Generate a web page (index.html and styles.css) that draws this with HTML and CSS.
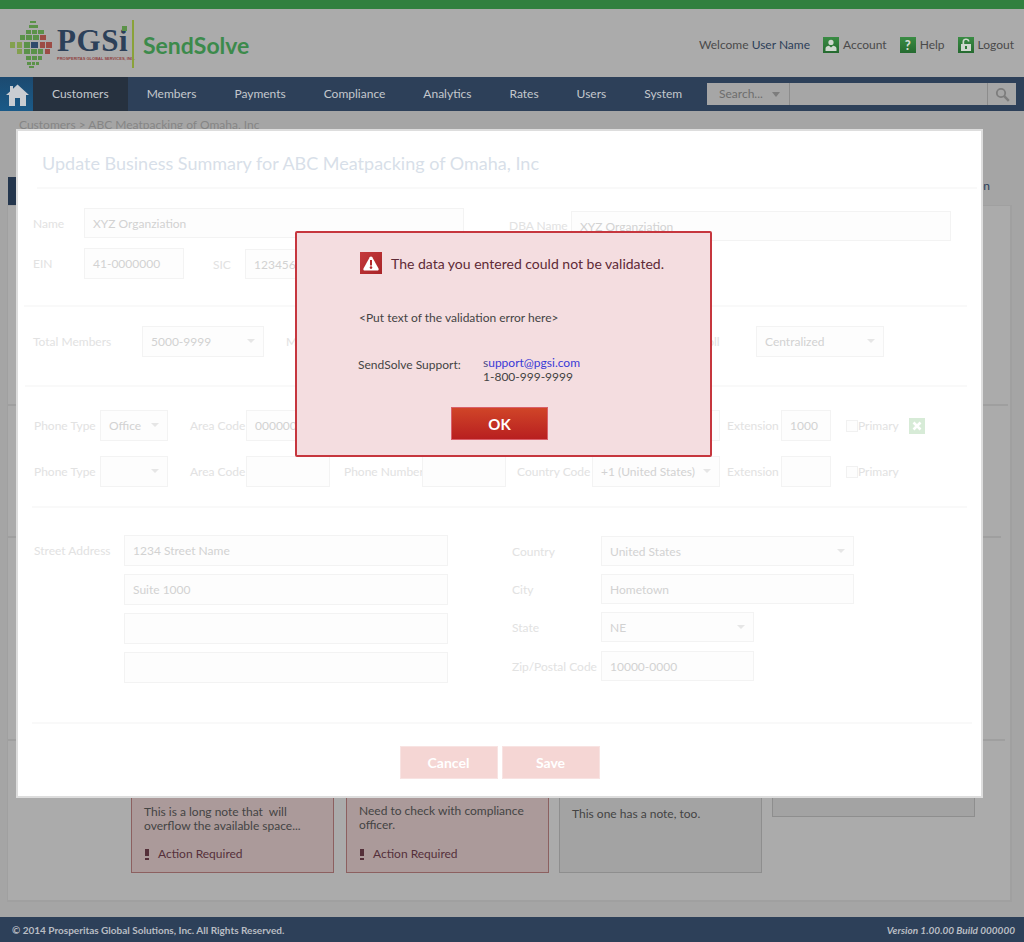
FILE: index.html
```html
<!DOCTYPE html>
<html lang="en">
<head>
  <meta charset="UTF-8">
  <title>SendSolve - Update Business Summary</title>
  <link rel="stylesheet" href="styles.css">
</head>
<body>
  <div class="topStrip"></div>

  <header class="siteHeader">
    <div class="logo">
      <svg class="globe" width="42" height="47" viewBox="0 0 42 47">
        <g fill="#5b9249">
          <rect x="20" y="0" width="6" height="2"/>
          <rect x="19" y="4" width="9" height="3"/>
          <rect x="16" y="9" width="5" height="4"/><rect x="22" y="9" width="5" height="4"/><rect x="28" y="9" width="6" height="4"/>
          <rect x="10" y="14" width="5" height="5"/><rect x="16" y="14" width="6" height="5"/><rect x="23" y="14" width="6" height="5"/>
          <rect x="14" y="21" width="6" height="6"/>
          <rect x="14" y="28" width="6" height="5"/><rect x="21" y="28" width="6" height="5"/><rect x="28" y="28" width="5" height="5"/>
          <rect x="16" y="35" width="5" height="4"/><rect x="22" y="35" width="5" height="4"/><rect x="28" y="35" width="4" height="4"/>
          <rect x="17" y="41" width="4" height="3"/><rect x="22" y="41" width="3" height="3"/><rect x="26" y="41" width="3" height="3"/>
          <rect x="19" y="45" width="5" height="2"/>
        </g>
        <g fill="#83a04f">
          <rect x="0" y="21" width="5" height="6"/><rect x="7" y="21" width="5" height="6"/>
          <rect x="7" y="28" width="5" height="5"/>
        </g>
        <rect x="21" y="21" width="7" height="6" fill="#2f4a6b"/>
        <g fill="#9c4c45">
          <rect x="30" y="14" width="6" height="5"/>
          <rect x="30" y="21" width="5" height="6"/><rect x="36" y="21" width="6" height="6"/>
          <rect x="35" y="28" width="5" height="5"/>
        </g>
      </svg>
      <div class="wordmark">
        <div class="pgsi">PGS<span class="pgsiDot">i</span></div>
        <div class="tagline">PROSPERITAS GLOBAL SERVICES, INC.</div>
      </div>
      <div class="logoRule"></div>
      <div class="product">SendSolve</div>
    </div>
    <div class="userLinks">
      <span class="welcome">Welcome <b class="userName">User Name</b></span>
      <a class="userLink">
        <span class="linkIcon">
          <svg width="12" height="12" viewBox="0 0 12 12"><circle cx="6" cy="3.4" r="2.6" fill="#cfd8cf"/><path d="M0.5 12V9.5C0.5 7.8 2.5 7 4 6.8L6 8.6L8 6.8C9.5 7 11.5 7.8 11.5 9.5V12Z" fill="#cfd8cf"/></svg>
        </span>
        Account
      </a>
      <a class="userLink helpLink">
        <span class="linkIcon">?</span>
        Help
      </a>
      <a class="userLink logoutLink">
        <span class="linkIcon">
          <svg width="12" height="13" viewBox="0 0 12 13"><path d="M2.5 6V3.6C2.5 1.6 4 0.5 6 0.5S9.5 1.6 9.5 3.4H7.8C7.8 2.6 7 2.1 6 2.1S4.2 2.6 4.2 3.6V6H11V13H1V6Z" fill="#cfd8cf"/><rect x="5" y="8" width="2" height="3" fill="#2f7c39"/></svg>
        </span>
        Logout
      </a>
    </div>
  </header>

  <nav class="mainNav">
    <a class="homeBtn">
      <svg width="23" height="22" viewBox="0 0 23 22"><path d="M11.5 0.5L23 11H20V22H14V14H9V22H3V11H0L4 7.4V2H7V4.7Z" fill="#c9cdd2"/></svg>
    </a>
    <a class="navItem active">Customers</a>
    <a class="navItem">Members</a>
    <a class="navItem">Payments</a>
    <a class="navItem">Compliance</a>
    <a class="navItem">Analytics</a>
    <a class="navItem">Rates</a>
    <a class="navItem">Users</a>
    <a class="navItem">System</a>
    <div class="searchBox">
      <div class="searchType">Search...</div>
      <div class="searchInput"></div>
      <div class="searchBtn">
        <svg width="15" height="15" viewBox="0 0 15 15"><circle cx="6" cy="6" r="4.2" fill="none" stroke="#7d7d7d" stroke-width="1.8"/><path d="M9.2 9.2L13.8 13.8" stroke="#7d7d7d" stroke-width="2.4"/></svg>
      </div>
    </div>
  </nav>

  <main class="pageBody">
    <div class="breadcrumb">Customers &gt; ABC Meatpacking of Omaha, Inc</div>
    <div class="tabRow">
      <div class="tabActive"></div>
      <div class="tabLink">Administration</div>
    </div>
    <section class="panel">
      <div class="panelLine lineA"></div>
      <div class="panelLine lineB"></div>
      <div class="panelLine lineC"></div>
      <div class="noteRow">
        <div class="note alert">
          <p>This is a long note that&nbsp; will overflow the available space...</p>
          <div class="actionReq"><span class="bang"></span>Action Required</div>
        </div>
        <div class="note alert second">
          <p>Need to check with compliance officer.</p>
          <div class="actionReq"><span class="bang"></span>Action Required</div>
        </div>
        <div class="note third">
          <p>This one has a note, too.</p>
        </div>
        <div class="note short"></div>
      </div>
    </section>
  </main>

  <footer class="siteFooter">
    <span>&copy; 2014 Prosperitas Global Solutions, Inc. All Rights Reserved.</span>
    <span class="version">Version 1.00.00 Build 000000</span>
  </footer>

  <!-- edit form, greyed out while the error box is up -->
  <div class="modal">
    <h1 class="modalTitle">Update Business Summary for ABC Meatpacking of Omaha, Inc</h1>
    <div class="rule titleRule"></div>

    <div class="identity">
      <div class="identityLeft">
        <div class="fieldRow">
          <label class="lbl wName">Name</label>
          <div class="field wLong">XYZ Organziation</div>
        </div>
        <div class="fieldRow einRow">
          <label class="lbl wName">EIN</label>
          <div class="field wShort tall">41-0000000</div>
          <label class="lbl wSic">SIC</label>
          <div class="field wShort sicField">123456</div>
        </div>
      </div>
      <div class="identityRight">
        <label class="lbl wDba">DBA Name</label>
        <div class="field wDbaField">XYZ Organziation</div>
      </div>
    </div>
    <div class="rule ruleA"></div>

    <div class="fieldRow membersRow">
      <label class="lbl wMembers">Total Members</label>
      <div class="field select wMemberSel tall">5000-9999</div>
      <label class="lbl wMonths">Members per Location</label>
      <label class="lbl wPayroll">Payroll</label>
      <div class="field select wPayrollSel tall">Centralized</div>
    </div>
    <div class="rule ruleB"></div>

    <div class="phoneGrid">
      <label class="lbl">Phone Type</label>
      <div class="field select tall">Office</div>
      <label class="lbl padArea">Area Code</label>
      <div class="field tall">000000</div>
      <label class="lbl padPhone">Phone Number</label>
      <div class="field tall"></div>
      <label class="lbl padCountry">Country Code</label>
      <div class="field select tall">+1 (United States)</div>
      <label class="lbl padExt">Extension</label>
      <div class="field tall">1000</div>
      <span class="checkbox"></span>
      <label class="lbl">Primary</label>
      <span class="removeBtn">
        <svg width="10" height="10" viewBox="0 0 10 10"><path d="M1.5 1.5L8.5 8.5M8.5 1.5L1.5 8.5" stroke="#fff" stroke-width="2.6"/></svg>
      </span>

      <label class="lbl">Phone Type</label>
      <div class="field select tall"></div>
      <label class="lbl padArea">Area Code</label>
      <div class="field tall"></div>
      <label class="lbl padPhone">Phone Number</label>
      <div class="field tall"></div>
      <label class="lbl padCountry">Country Code</label>
      <div class="field select tall">+1 (United States)</div>
      <label class="lbl padExt">Extension</label>
      <div class="field tall"></div>
      <span class="checkbox"></span>
      <label class="lbl">Primary</label>
      <span></span>
    </div>
    <div class="rule ruleC"></div>

    <div class="address">
      <div class="addressLeft">
        <label class="lbl wStreet">Street Address</label>
        <div class="stack">
          <div class="field wStreetField tall">1234 Street Name</div>
          <div class="field wStreetField tall">Suite 1000</div>
          <div class="field wStreetField tall"></div>
          <div class="field wStreetField tall"></div>
        </div>
      </div>
      <div class="addressRight">
        <div class="fieldRow">
          <label class="lbl wPlace">Country</label>
          <div class="field select wPlaceLong">United States</div>
        </div>
        <div class="fieldRow">
          <label class="lbl wPlace">City</label>
          <div class="field wPlaceLong">Hometown</div>
        </div>
        <div class="fieldRow">
          <label class="lbl wPlace">State</label>
          <div class="field select wPlaceShort">NE</div>
        </div>
        <div class="fieldRow zipRow">
          <label class="lbl wPlace">Zip/Postal Code</label>
          <div class="field wPlaceShort">10000-0000</div>
        </div>
      </div>
    </div>
    <div class="rule ruleD"></div>

    <div class="modalButtons">
      <button class="fadedBtn">Cancel</button>
      <button class="fadedBtn">Save</button>
    </div>
  </div>

  <div class="errorBox">
    <div class="errorHead">
      <span class="errorIcon">
        <svg width="16" height="15" viewBox="0 0 16 15"><path d="M8 0.5C8.6 0.5 9 0.8 9.3 1.3L15.5 12.4C16 13.4 15.4 14.5 14.2 14.5H1.8C0.6 14.5 0 13.4 0.5 12.4L6.7 1.3C7 0.8 7.4 0.5 8 0.5Z" fill="#fff"/><rect x="7" y="4" width="2" height="5.5" fill="#b5282c"/><circle cx="8" cy="11.6" r="1.3" fill="#b5282c"/></svg>
      </span>
      <span>The data you entered could not be validated.</span>
    </div>
    <p class="errorText">&lt;Put text of the validation error here&gt;</p>
    <div class="supportRow">
      <span class="supportLabel">SendSolve Support:</span>
      <div>
        <a class="supportMail"><span class="mailFirst">s</span>upport@pgsi.com</a>
        <div>1-800-999-9999</div>
      </div>
    </div>
    <button class="okBtn">OK</button>
  </div>
</body>
</html>
```

FILE: styles.css
```css
* {
  box-sizing: border-box;
}
body {
  margin: 0;
  height: 942px;
  overflow: hidden;
  display: flex;
  flex-direction: column;
  background: #a5a5a5;
  font-family: Lato, "Open Sans", sans-serif;
  font-size: 12px;
  color: #444;
}
p {
  margin: 0;
}
.topStrip {
  height: 9px;
  background: #31803f;
}

/* header */
.siteHeader {
  height: 68px;
  display: flex;
  justify-content: space-between;
  background: #ababab;
}
.logo {
  display: flex;
  padding: 11px 0 0 10px;
}
.globe {
  margin-top: 1px;
}
.wordmark {
  margin: 5px 0 0 5px;
  width: 65px;
}
.pgsi {
  position: relative;
  font-family: "Liberation Serif", serif;
  font-weight: bold;
  font-size: 31px;
  line-height: 31px;
  letter-spacing: 0.6px;
  color: #2c4059;
}
.pgsiDot {
  position: relative;
}
.pgsiDot::after {
  content: "";
  position: absolute;
  left: 3px;
  top: 3px;
  width: 5px;
  height: 5px;
  background: #5b9249;
}
.tagline {
  font-family: "Liberation Sans", sans-serif;
  font-size: 4px;
  line-height: 5px;
  font-weight: bold;
  white-space: nowrap;
  color: #8f3f3f;
}
.logoRule {
  width: 2px;
  height: 48px;
  margin: 0 9px 0 10px;
  background: #8aa23a;
}
.product {
  font-size: 23px;
  line-height: 50px;
  font-weight: bold;
  color: #3c8a4b;
}
.userLinks {
  display: flex;
  align-items: center;
  padding: 3px 10px 0 0;
  color: #4a4a4a;
}
.welcome {
  margin-right: 13px;
}
.userName {
  font-weight: normal;
  color: #2d4059;
}
.userLink {
  display: flex;
  align-items: center;
  gap: 4px;
}
.helpLink {
  margin-left: 13px;
}
.logoutLink {
  margin-left: 13px;
}
.linkIcon {
  width: 16px;
  height: 16px;
  display: flex;
  align-items: center;
  justify-content: center;
  background: linear-gradient(#3a8c44, #256a30);
  color: #d5dcd5;
  font-weight: 900;
  font-size: 13px;
}

/* nav */
.mainNav {
  height: 34px;
  display: flex;
  background: #2d4059;
}
.homeBtn {
  width: 33px;
  padding: 7px 0 0 6px;
  background: linear-gradient(#1c4a70, #1a5a88);
}
.navItem {
  padding: 0 19px;
  line-height: 33px;
  color: #c4c8cd;
}
.navItem.active {
  background: #26313f;
}
.searchBox {
  display: flex;
  width: 309px;
  height: 22px;
  margin: 6px 8px 0 auto;
  background: #a6a6a6;
}
.searchType {
  position: relative;
  width: 83px;
  padding-left: 12px;
  line-height: 22px;
  border-right: 1px solid #8c8c8c;
  color: #6d6d6d;
}
.searchType::after {
  content: "";
  position: absolute;
  right: 9px;
  top: 9px;
  border: 4px solid transparent;
  border-top: 5px solid #7d7d7d;
  border-bottom: 0;
}
.searchInput {
  flex: 1;
}
.searchBtn {
  width: 29px;
  padding: 4px 0 0 7px;
  border-left: 1px solid #8c8c8c;
}

/* page behind the modal */
.pageBody {
  flex: 1;
  display: flex;
  flex-direction: column;
  padding: 0 12px 15px 7px;
}
.breadcrumb {
  height: 66px;
  padding: 6px 0 0 12px;
  color: #858585;
}
.tabRow {
  height: 28px;
  display: flex;
  justify-content: space-between;
}
.tabActive {
  width: 60px;
  margin-left: 1px;
  background: #24364d;
}
.tabLink {
  margin-right: 22px;
  line-height: 18px;
  color: #2d4059;
}
.panel {
  flex: 1;
  display: flex;
  flex-direction: column;
  background: #ababab;
  border: 1px solid #a0a0a0;
  border-width: 1px 2px 2px 1px;
}
.panelLine {
  height: 2px;
  background: #9f9f9f;
}
.lineA {
  margin: 198px 2px 0 0;
}
.lineB {
  margin: 130px 9px 0 0;
}
.lineC {
  margin: 201px 5px 0 0;
}
.noteRow {
  display: flex;
  align-items: flex-start;
  gap: 10px;
  margin: 32px 0 0 123px;
}
.note {
  display: flex;
  flex-direction: column;
  width: 203px;
  height: 100px;
  padding: 31px 12px 11px;
  line-height: 14px;
  background: #a3a3a3;
  border: 1px solid #8e8e8e;
  color: #444;
}
.note.alert {
  background: #ab9a9a;
  border-color: #8c6060;
}
.note.second {
  margin-left: 2px;
  padding-top: 30px;
}
.note.third {
  padding-top: 33px;
}
.note.short {
  height: 33px;
}
.actionReq {
  display: flex;
  align-items: center;
  margin-top: auto;
  color: #55303a;
}
.bang {
  width: 4px;
  height: 11px;
  margin: 0 9px 0 1px;
  background: linear-gradient(#55303a 0 7px, transparent 7px 9px, #55303a 9px);
}
.siteFooter {
  height: 25px;
  display: flex;
  justify-content: space-between;
  align-items: center;
  padding: 0 9px 0 12px;
  background: #2d4059;
  color: #b9bdc3;
  font-size: 10px;
  font-weight: bold;
}
.version {
  font-style: italic;
}

/* modal form */
.modal {
  position: absolute;
  left: 16px;
  top: 129px;
  width: 967px;
  height: 669px;
  padding: 0 0 0 15px;
  background: #fff;
  border: 2px solid #ddd;
}
.modalTitle {
  margin: 20px 0 0 9px;
  font-size: 18px;
  line-height: 24px;
  font-weight: normal;
  color: #d8dfe9;
}
.rule {
  height: 2px;
  background: #f9f9f9;
}
.titleRule {
  margin: 12px 4px 0 4px;
}
.ruleA {
  margin: 26px 14px 0 -9px;
}
.ruleB {
  margin: 28px 14px 0 -8px;
}
.ruleC {
  margin: 19px 14px 0 -1px;
}
.ruleD {
  margin: 39px 9px 0 -1px;
}
.lbl {
  color: #e2e2e2;
  white-space: nowrap;
}
.field {
  position: relative;
  height: 30px;
  padding-left: 8px;
  line-height: 29px;
  background: #fdfdfd;
  border: 1px solid #f3f3f3;
  color: #d2d2d2;
  white-space: nowrap;
  overflow: hidden;
}
.field.tall {
  height: 31px;
}
.field.select::after {
  content: "";
  position: absolute;
  right: 8px;
  top: 12px;
  border: 4px solid transparent;
  border-top: 4px solid #e6e6e6;
  border-bottom: 0;
}
.fieldRow {
  display: flex;
  align-items: center;
}
.identity {
  display: flex;
  padding-top: 19px;
}
.identityLeft {
  width: 431px;
}
.einRow {
  margin-top: 9px;
}
.sicField {
  margin-top: 2px;
}
.identityRight {
  display: flex;
  align-items: center;
  height: 31px;
  margin: 2px 0 0 45px;
}
.wName {
  width: 51px;
}
.wLong {
  width: 380px;
}
.wShort {
  width: 100px;
}
.wSic {
  width: 32px;
  margin: 2px 0 0 29px;
}
.wDba {
  width: 62px;
}
.wDbaField {
  width: 380px;
}
.membersRow {
  margin-top: 19px;
}
.wMembers {
  width: 109px;
}
.wMemberSel {
  width: 122px;
}
.wMonths {
  width: 398px;
  margin-left: 22px;
}
.wPayroll {
  width: 72px;
}
.wPayrollSel {
  width: 128px;
}
.phoneGrid {
  display: grid;
  grid-template-columns: 66px 68px 78px 84px 92px 84px 86px 128px 61px 50px 27px 51px 16px;
  row-gap: 15px;
  align-items: center;
  margin: 23px 0 0 1px;
}
.padArea {
  padding-left: 22px;
}
.padPhone {
  padding-left: 14px;
}
.padCountry {
  padding-left: 11px;
}
.padExt {
  padding-left: 7px;
}
.checkbox {
  width: 12px;
  height: 12px;
  margin-left: 15px;
  background: #fdfdfd;
  border: 1px solid #f1f1f1;
}
.removeBtn {
  display: flex;
  align-items: center;
  justify-content: center;
  width: 16px;
  height: 16px;
  background: #d7ebd7;
}
.address {
  display: flex;
  margin-top: 27px;
}
.addressLeft {
  display: flex;
  align-items: flex-start;
  width: 479px;
  padding-left: 1px;
}
.wStreet {
  width: 90px;
  line-height: 31px;
}
.stack {
  display: flex;
  flex-direction: column;
  gap: 8px;
}
.wStreetField {
  width: 324px;
}
.addressRight {
  display: flex;
  flex-direction: column;
  gap: 8px;
  margin-top: 1px;
}
.zipRow {
  margin-top: 1px;
}
.wPlace {
  width: 89px;
}
.wPlaceLong {
  width: 253px;
}
.wPlaceShort {
  width: 153px;
}
.modalButtons {
  display: flex;
  justify-content: center;
  gap: 4px;
  margin: 22px 0 0 -15px;
}
.fadedBtn {
  width: 98px;
  height: 33px;
  padding: 0;
  background: #f5d6d4;
  border: 1px solid #f8e3e2;
  color: #fff;
  font-family: inherit;
  font-size: 14px;
  font-weight: bold;
}

/* validation error box */
.errorBox {
  position: absolute;
  left: 295px;
  top: 231px;
  width: 417px;
  height: 226px;
  padding-top: 19px;
  background: #f4dde0;
  border: 2px solid #c6363e;
  border-radius: 2px;
}
.errorHead {
  display: flex;
  align-items: center;
  gap: 9px;
  padding-left: 63px;
  font-size: 14px;
  color: #5e2a36;
}
.errorIcon {
  display: flex;
  align-items: center;
  justify-content: center;
  width: 22px;
  height: 22px;
  background: linear-gradient(135deg, #c53a3c, #a82428);
}
.errorText {
  margin: 36px 0 0 62px;
  line-height: 16px;
}
.supportRow {
  display: flex;
  margin: 30px 0 0 61px;
  line-height: 14px;
}
.supportLabel {
  width: 125px;
  padding-top: 2px;
}
.supportMail {
  color: #3a3ad6;
}
.mailFirst {
  color: #4a4a80;
}
.okBtn {
  display: block;
  width: 97px;
  height: 33px;
  margin: 23px 0 0 154px;
  padding: 0;
  background: linear-gradient(#d04528, #b81f20);
  border: 1px solid #d9606a;
  color: #fff;
  font-family: inherit;
  font-size: 15px;
  font-weight: bold;
}
```
